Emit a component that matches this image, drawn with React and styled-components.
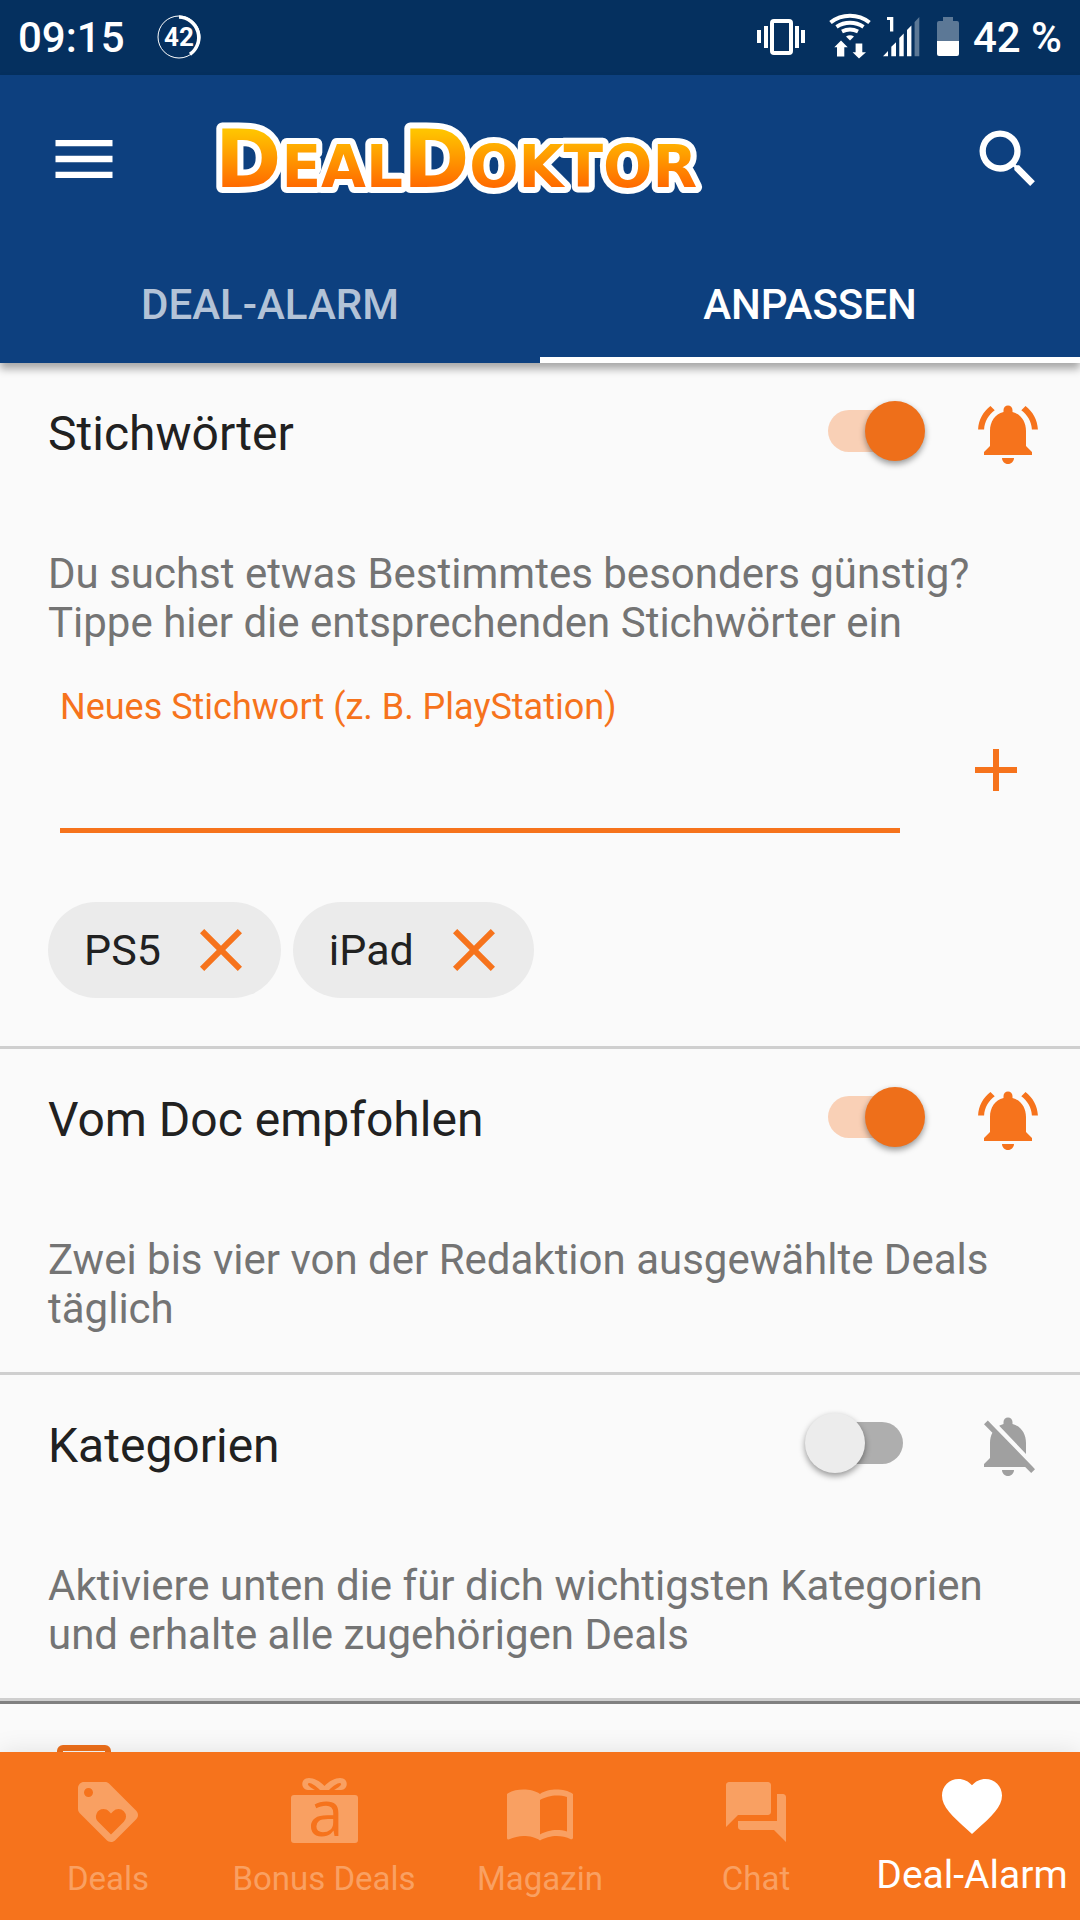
import React, { useState } from "react";
import styled, { createGlobalStyle } from "styled-components";
import {
  MdMenu,
  MdSearch,
  MdAdd,
  MdClose,
  MdLoyalty,
  MdImportContacts,
  MdForum,
  MdFavorite,
} from "react-icons/md";

const orange = "#f6731c";

const BellOn = () => (
  <svg viewBox="0 0 24 24" fill="currentColor">
    <path d="M7.58 4.08L6.15 2.65C3.75 4.48 2.17 7.3 2.03 10.5h2c.15-2.65 1.51-4.97 3.55-6.42zm12.39 6.42h2c-.15-3.2-1.73-6.02-4.12-7.85l-1.42 1.43c2.02 1.45 3.39 3.77 3.54 6.42zM18 11c0-3.07-1.64-5.64-4.5-6.32V4c0-.83-.67-1.5-1.5-1.5s-1.5.67-1.5 1.5v.68C7.63 5.36 6 7.92 6 11v5l-2 2v1h16v-1l-2-2v-5zM12 22c1.1 0 2-.9 2-2h-4c0 1.1.89 2 2 2z" />
  </svg>
);

const BellOff = () => (
  <svg viewBox="0 0 24 24" fill="currentColor">
    <path d="M20 18.69L7.84 6.14 5.27 3.49 4 4.76l2.8 2.8v.01c-.52.99-.8 2.16-.8 3.42v5l-2 2v1h13.73l2 2L21 19.72l-1-1.03zM12 22c1.11 0 2-.89 2-2h-4c0 1.11.89 2 2 2zm6-7.32V11c0-3.08-1.64-5.64-4.5-6.32V4c0-.83-.67-1.5-1.5-1.5s-1.5.67-1.5 1.5v.68c-.15.03-.29.08-.42.12-.1.03-.2.07-.3.11h-.01c-.01 0-.01 0-.02.01-.23.09-.46.2-.68.31 0 0-.01 0-.01.01L18 14.68z" />
  </svg>
);

const GiftIcon = () => (
  <svg viewBox="0 0 72 72" fill="currentColor">
    <rect x="3" y="19" width="67" height="48" rx="3" />
    <path
      fillRule="evenodd"
      d="M36.500 10C41 5 47 2 52 2C58 2 60 7 58 11C57 13 55 14 53 14L46 14C50 12 54 9 53 7.500C51.500 5.500 46 9 41 14L32 14C27 9 21.500 5.500 20 7.500C19 9 23 12 27 14L20 14C18 14 16 13 15 11C13 7 15 2 21 2C26 2 32 5 36.500 10Z"
    />
    <GiftLetter x="20" y="60">
      a
    </GiftLetter>
  </svg>
);

const StatusIcons = () => (
  <svg width="202" height="52" viewBox="0 0 202 52" fill="#fff">
    {/* vibrate */}
    <rect x="15" y="9" width="19" height="32" rx="2" fill="none" stroke="#fff" strokeWidth="4" />
    <path d="M0 18h4v13H0zM7 14h4v22H7zM38 14h4v22h-4zM44 18h4v13h-4z" />
    {/* wifi */}
    <g fill="none" stroke="#fff" strokeWidth="4">
      <path d="M73.500 10.500A31.500 31.500 0 0 1 112.500 10.500" />
      <path d="M79.500 14.800A24.500 24.500 0 0 1 106.500 14.800" />
      <path d="M85 19.500A18 18 0 0 1 101 19.500" />
    </g>
    <path d="M89 24.500Q93 22 97 24.500L93 28.500Z" />
    <path d="M84 28.500L90.700 35.200H87.300V44.500H80V35.200H77.300ZM102 46.500L95.600 40.200H98.600V31.500H105.300V40.200H109Z" />
    {/* signal */}
    <path d="M130 5h6.300v14.500H133V8h-3z" />
    <path d="M126 44.200L131 39v5.200zM134.300 44.200V34.800L139 30.200v14zM142.300 44.200V26l4.400-4.500v22.700zM150 44.200V18l4.400-4.500v30.700z" />
    <path d="M157.600 44.200V10l4.700-5v39.200z" opacity="0.35" />
    {/* battery */}
    <path d="M180 29V11q0-2 2-2h4V5h10v4h4q2 0 2 2v18z" opacity="0.35" />
    <path d="M180 29h22v13q0 2-2 2h-18q-2 0-2-2z" />
  </svg>
);

const BatteryRing = () => (
  <svg width="46" height="46" viewBox="0 0 46 46" fill="none" stroke="#fff">
    <circle cx="22" cy="22" r="21" strokeWidth="1" />
    <path d="M22 2A20.500 20.500 0 0 1 33 39.300" strokeWidth="3.500" />
    <RingText x="22" y="31">
      42
    </RingText>
  </svg>
);

const DoktorLogo = () => (
  <LogoSvg width="504" height="108" viewBox="0 0 504 108" role="img" aria-label="DealDoktor">
    <defs>
      <linearGradient id="logo" gradientUnits="userSpaceOnUse" x1="0" y1="26" x2="0" y2="82">
        <stop offset="0" stopColor="#ffc400" />
        <stop offset="1" stopColor="#ff6a00" />
      </linearGradient>
    </defs>
    <LogoText x="1" y="82">
      D<tspan fontSize="58">EAL</tspan>D<tspan fontSize="58">OKTOR</tspan>
    </LogoText>
  </LogoSvg>
);

const SettingBlock = ({ id, title, text, defaultOn, children }) => {
  const [on, setOn] = useState(defaultOn);

  return (
    <Section>
      <SectionTop>
        <SectionTitle htmlFor={id}>{title}</SectionTitle>
        <Switch
          id={id}
          type="checkbox"
          role="switch"
          checked={on}
          onChange={(e) => setOn(e.target.checked)}
        />
        <BellButton $on={on} aria-label={`Benachrichtigung ${title}`}>
          {on ? <BellOn /> : <BellOff />}
        </BellButton>
      </SectionTop>
      <SectionText>{text}</SectionText>
      {children}
    </Section>
  );
};

const navItems = [
  { label: "Deals", icon: <MdLoyalty /> },
  { label: "Bonus Deals", icon: <GiftIcon /> },
  { label: "Magazin", icon: <MdImportContacts /> },
  { label: "Chat", icon: <MdForum /> },
  { label: "Deal-Alarm", icon: <MdFavorite />, active: true },
];

const App = () => {
  const [keywords, setKeywords] = useState(["PS5", "iPad"]);
  const [value, setValue] = useState("");

  const handleAdd = (e) => {
    e.preventDefault();
    if (value.trim()) {
      setKeywords([...keywords, value.trim()]);
      setValue("");
    }
  };

  return (
    <AppContainer>
      <GlobalStyle />
      <StatusBar>
        <StatusText>09:15</StatusText>
        <BatteryRing />
        <StatusRight>
          <StatusIcons />
          <StatusText>42 %</StatusText>
        </StatusRight>
      </StatusBar>

      <Header>
        <Toolbar>
          <ToolbarButton aria-label="Menü">
            <MdMenu />
          </ToolbarButton>
          <DoktorLogo />
          <ToolbarButton aria-label="Suche">
            <MdSearch />
          </ToolbarButton>
        </Toolbar>
        <Tabs>
          <Tab>DEAL-ALARM</Tab>
          <Tab $active>ANPASSEN</Tab>
        </Tabs>
      </Header>

      <Content>
        <SettingBlock
          id="stichwoerter"
          title="Stichwörter"
          text="Du suchst etwas Bestimmtes besonders günstig? Tippe hier die entsprechenden Stichwörter ein"
          defaultOn
        >
          <KeywordForm onSubmit={handleAdd}>
            <KeywordField>
              <KeywordLabel htmlFor="keyword">Neues Stichwort (z. B. PlayStation)</KeywordLabel>
              <KeywordInput
                id="keyword"
                value={value}
                onChange={(e) => setValue(e.target.value)}
              />
            </KeywordField>
            <AddButton type="submit" aria-label="Hinzufügen">
              <MdAdd />
            </AddButton>
          </KeywordForm>
          <Chips>
            {keywords.map((k) => (
              <Chip key={k}>
                {k}
                <ChipRemove
                  aria-label={`${k} entfernen`}
                  onClick={() => setKeywords(keywords.filter((x) => x !== k))}
                >
                  <MdClose />
                </ChipRemove>
              </Chip>
            ))}
          </Chips>
        </SettingBlock>

        <SettingBlock
          id="empfohlen"
          title="Vom Doc empfohlen"
          text="Zwei bis vier von der Redaktion ausgewählte Deals täglich"
          defaultOn
        />

        <SettingBlock
          id="kategorien"
          title="Kategorien"
          text="Aktiviere unten die für dich wichtigsten Kategorien und erhalte alle zugehörigen Deals"
          defaultOn={false}
        />

        <CategoryList>
          <CategoryCheckbox type="checkbox" aria-label="Kategorie" />
        </CategoryList>
      </Content>

      <BottomNav>
        {navItems.map((item) => (
          <NavItem key={item.label} href="#" $active={item.active}>
            {item.icon}
            <span>{item.label}</span>
          </NavItem>
        ))}
      </BottomNav>
    </AppContainer>
  );
};

export default App;

const GlobalStyle = createGlobalStyle`
  * {
    box-sizing: border-box;
  }
  body {
    margin: 0;
    font-family: Roboto, "Noto Sans", sans-serif;
    background: #fafafa;
  }
  button, input {
    margin: 0;
    padding: 0;
    border: none;
    background: none;
    font: inherit;
    color: inherit;
  }
  svg {
    display: block;
    flex-shrink: 0;
    overflow: visible;
  }
`;

const AppContainer = styled.div`
  display: flex;
  flex-direction: column;
  height: 100vh;
`;

const StatusBar = styled.div`
  display: flex;
  align-items: center;
  flex-shrink: 0;
  height: 75px;
  padding: 0 18px;
  gap: 32px;
  background: #05305f;
  color: #fff;
`;
const StatusText = styled.span`
  font-size: 42px;
  font-weight: 500;
  line-height: 48px;
`;
const RingText = styled.text`
  font-size: 26px;
  font-weight: 700;
  text-anchor: middle;
  fill: #fff;
  stroke: none;
`;
const StatusRight = styled.div`
  display: flex;
  align-items: center;
  gap: 14px;
  margin-left: auto;
`;

const Header = styled.header`
  position: relative;
  z-index: 1;
  flex-shrink: 0;
  background: #0d407f;
  color: #fff;
  box-shadow: 0 6px 8px rgba(0, 0, 0, 0.33);
`;
const Toolbar = styled.div`
  display: flex;
  align-items: center;
  height: 168px;
  padding: 0 34px 0 46px;
`;
const ToolbarButton = styled.button`
  svg {
    width: 76px;
    height: 76px;
  }
`;
const LogoSvg = styled.svg`
  margin-left: 92px;
  margin-right: auto;
`;
const LogoText = styled.text`
  font-family: "DejaVu Sans", sans-serif;
  font-size: 80px;
  font-weight: 700;
  fill: url(#logo);
  stroke: #fff;
  stroke-width: 12px;
  stroke-linejoin: round;
  paint-order: stroke;
`;
const Tabs = styled.nav`
  display: flex;
`;
const Tab = styled.button`
  flex: 1;
  height: 120px;
  border-top: 8px solid transparent;
  border-bottom: 6px solid ${(props) => (props.$active ? "#fff" : "transparent")};
  font-size: 42px;
  font-weight: 500;
  color: ${(props) => (props.$active ? "#fff" : "rgba(255, 255, 255, 0.7)")};
`;

const Content = styled.main`
  flex: 1;
  min-height: 0;
  overflow-y: auto;
  scrollbar-width: none;
`;
const Section = styled.section`
  padding: 24px 36px 39px 48px;
  border-bottom: 3px solid #cfcfcf;
`;
const SectionTop = styled.div`
  display: flex;
  align-items: center;
  height: 94px;
`;
const SectionTitle = styled.label`
  flex: 1;
  font-size: 48px;
  line-height: 56px;
  color: #212121;
`;
const Switch = styled.input`
  appearance: none;
  position: relative;
  width: 122px;
  height: 60px;
  margin: 0 45px 6px 0;
  cursor: pointer;

  &::before {
    content: "";
    position: absolute;
    top: 9px;
    left: 23px;
    width: 75px;
    height: 42px;
    border-radius: 21px;
    background: #aeaeae;
  }
  &::after {
    content: "";
    position: absolute;
    top: 0;
    left: 0;
    width: 60px;
    height: 60px;
    border-radius: 50%;
    background: #ececec;
    box-shadow: 0 3px 6px rgba(0, 0, 0, 0.4);
  }
  &:checked::before {
    background: #f9d0b6;
  }
  &:checked::after {
    left: 60px;
    background: #ee6f1a;
  }
`;
const BellButton = styled.button`
  color: ${(props) => (props.$on ? orange : "#a0a0a0")};
  svg {
    width: 72px;
    height: 72px;
  }
`;
const SectionText = styled.p`
  margin: 68px 0 0;
  max-width: 960px;
  font-size: 42px;
  line-height: 49px;
  color: #747474;
`;

const KeywordForm = styled.form`
  display: flex;
  align-items: center;
  margin-top: 39px;
  padding-left: 12px;
`;
const KeywordField = styled.div`
  flex: 1;
  display: flex;
  flex-direction: column;
`;
const KeywordLabel = styled.label`
  font-size: 36px;
  line-height: 42px;
  color: ${orange};
`;
const KeywordInput = styled.input`
  width: 100%;
  height: 105px;
  border-bottom: 5px solid ${orange};
  font-size: 42px;
  color: #212121;
  outline: none;
`;
const AddButton = styled.button`
  margin: 20px 12px 0 60px;
  color: ${orange};
  svg {
    width: 72px;
    height: 72px;
  }
`;

const Chips = styled.div`
  display: flex;
  flex-wrap: wrap;
  gap: 12px;
  margin: 69px 0 9px;
`;
const Chip = styled.div`
  display: flex;
  align-items: center;
  gap: 24px;
  height: 96px;
  padding: 0 24px 0 36px;
  border-radius: 48px;
  background: #ebebeb;
  font-size: 43px;
  color: #212121;
`;
const ChipRemove = styled.button`
  color: ${orange};
  svg {
    width: 72px;
    height: 72px;
  }
`;

const CategoryList = styled.div`
  padding: 41px 57px;
  border-top: 3px solid #808080;
`;
const CategoryCheckbox = styled.input`
  appearance: none;
  display: block;
  width: 54px;
  height: 54px;
  border: 6px solid #ee6f1a;
  border-radius: 6px;
`;

const BottomNav = styled.nav`
  position: relative;
  z-index: 1;
  display: grid;
  grid-template-columns: repeat(5, 1fr);
  flex-shrink: 0;
  height: 168px;
  background: ${orange};
  box-shadow: 0 0 24px rgba(0, 0, 0, 0.1);
`;
const NavItem = styled.a`
  display: flex;
  flex-direction: column;
  align-items: center;
  gap: ${(props) => (props.$active ? "12px" : "10px")};
  padding-top: ${(props) => (props.$active ? "18px" : "24px")};
  font-size: ${(props) => (props.$active ? "39px" : "33px")};
  line-height: 42px;
  white-space: nowrap;
  text-decoration: none;
  color: ${(props) => (props.$active ? "#fff" : "#f9a062")};
  svg {
    width: 72px;
    height: 72px;
  }
`;
const GiftLetter = styled.text`
  font-family: "Open Sans", sans-serif;
  font-size: 64px;
  fill: ${orange};
`;
